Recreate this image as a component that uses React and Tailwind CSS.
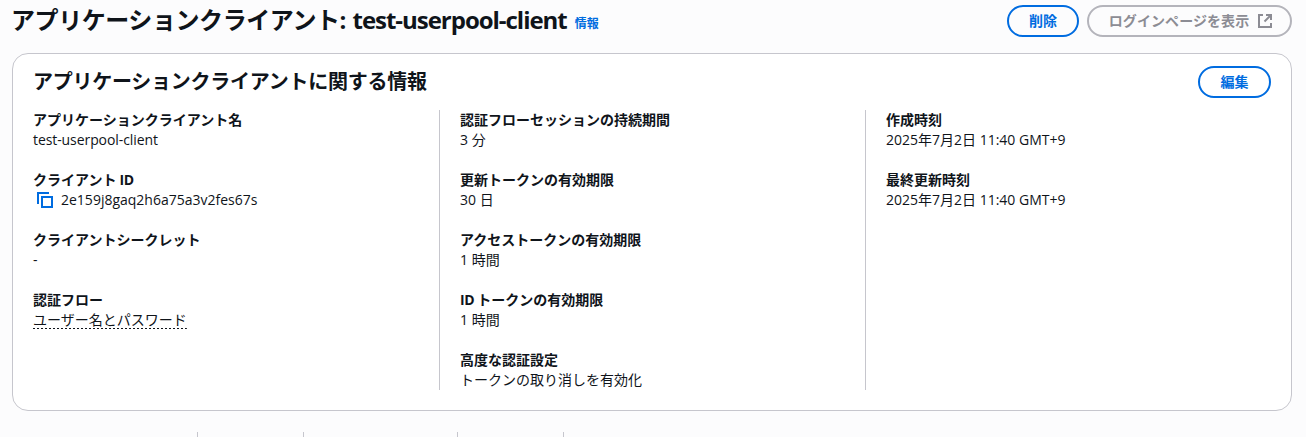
import React from "react";

function Latin({ className = "", children }) {
  return <span className={`whitespace-pre ${className}`}>{children}</span>;
}

function Field({ label, children }) {
  return (
    <div className="h-10 text-sm leading-5">
      <div className="h-5 font-bold">{label}</div>
      <div className="flex h-5 items-start">{children}</div>
    </div>
  );
}

function Button({ className, children }) {
  return (
    <button
      className={`flex h-8 shrink-0 items-center justify-center rounded-full border-2 text-sm leading-5 font-bold ${className}`}
    >
      {children}
    </button>
  );
}

function CopyIcon() {
  return (
    <svg width="16" height="16" viewBox="0 0 16 16" fill="none" stroke="#006ce0" strokeWidth="2" className="mt-0.5 mr-2 ml-1 shrink-0">
      <path d="M1 12V1h11" />
      <path d="M5 5h10v10H5z" />
    </svg>
  );
}

function ExternalIcon() {
  return (
    <svg width="16" height="16" viewBox="0 0 16 16" fill="none" stroke="#8c8c94" strokeWidth="2">
      <path d="M6 2H2v12h12v-4" />
      <path d="M9 2h5v5" />
      <path d="M14 2 7.5 8.5" />
    </svg>
  );
}

export default function App() {
  return (
    <div
      lang="ja"
      className="h-[437px] w-[1306px] overflow-hidden bg-[#fcfcfd] font-['Open_Sans','Noto_Sans_CJK_JP',sans-serif] text-[#0f141a]"
    >
      <header className="flex h-[53px] items-start pr-[14px] pl-[11px]">
        <h1 className="flex h-10 grow items-center text-2xl leading-[40px] font-bold whitespace-pre">
          <span className="tracking-[-0.43px]">アプリケーションクライアント</span>
          <Latin className="w-[13px] tracking-[-0.48px]">: </Latin>
          <Latin className="tracking-[-1.03px]">test-userpool-client</Latin>
          <a className="mt-2 ml-2 text-xs leading-4 tracking-[0.06px] text-[#006ce0]">情報</a>
        </h1>
        <div className="flex gap-2 pt-[5px]">
          <Button className="w-[72px] border-[#006ce0] text-[#006ce0]">削除</Button>
          <Button className="w-[205px] gap-2 border-[#b4b4bb] pl-[3px] tracking-[0.07px] text-[#8c8c94]">
            ログインページを表示
            <ExternalIcon />
          </Button>
        </div>
      </header>

      <section className="ml-3 h-[358px] w-[1280px] rounded-2xl border border-[#c6c6cd] bg-white pt-3">
        <div className="flex h-8 items-center justify-between px-5">
          <h2 className="text-xl leading-6 font-bold tracking-[-0.25px]">アプリケーションクライアントに関する情報</h2>
          <Button className="w-[73px] border-[#006ce0] text-[#006ce0]">編集</Button>
        </div>
        <div className="mt-3 flex h-[280px] pl-5">
          <div className="flex w-[406px] flex-col gap-5">
            <Field label="アプリケーションクライアント名">
              <Latin className="tracking-[-0.08px]">test-userpool-client</Latin>
            </Field>
            <Field label={<>クライアント<Latin className="tracking-[-0.5px]"> ID</Latin></>}>
              <CopyIcon />
              <Latin>2e159j8gaq2h6a75a3v2fes67s</Latin>
            </Field>
            <Field label="クライアントシークレット">-</Field>
            <Field label="認証フロー">
              <span className="h-[19px] bg-[repeating-linear-gradient(90deg,#0f141a_0_2px,transparent_2px_4px)] bg-[length:100%_1px] bg-bottom bg-no-repeat">
                ユーザー名とパスワード
              </span>
            </Field>
          </div>
          <div className="flex w-[426px] flex-col gap-5 border-l border-[#c6c6cd] pl-5">
            <Field label="認証フローセッションの持続期間">3 分</Field>
            <Field label="更新トークンの有効期限">30 日</Field>
            <Field label="アクセストークンの有効期限">1 時間</Field>
            <Field label={<><Latin className="tracking-[-0.5px]">ID </Latin>トークンの有効期限</>}>1 時間</Field>
            <Field label="高度な認証設定">トークンの取り消しを有効化</Field>
          </div>
          <div className="flex grow flex-col gap-5 border-l border-[#c6c6cd] pl-5">
            <Field label="作成時刻">2025年7月2日 11:40 GMT+9</Field>
            <Field label="最終更新時刻">2025年7月2日 11:40 GMT+9</Field>
          </div>
        </div>
      </section>

      <div className="mt-[21px] flex h-[5px]">
        <div className="w-[198px] border-r border-[#c6c6cd]" />
        <div className="w-[106px] border-r border-[#c6c6cd]" />
        <div className="w-[154px] border-r border-[#c6c6cd]" />
        <div className="w-[106px] border-r border-[#c6c6cd]" />
      </div>
    </div>
  );
}
